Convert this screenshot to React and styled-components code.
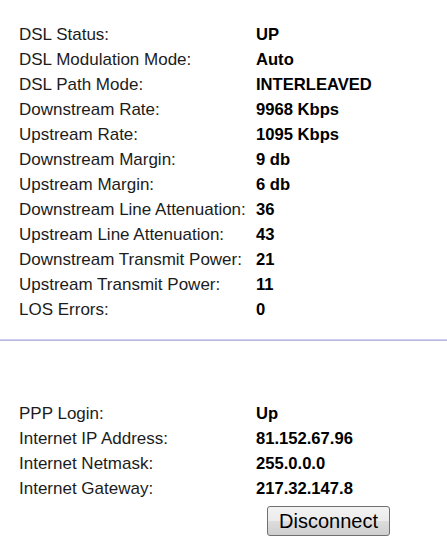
import styled, { createGlobalStyle } from "styled-components";

const GlobalStyle = createGlobalStyle`
  html, body {
    margin: 0;
    padding: 0;
    background: #ffffff;
  }
  body {
    font-family: "Liberation Sans", Arial, sans-serif;
  }
`;

const Page = styled.div`
  width: 447px;
  height: 556px;
  display: flex;
  flex-direction: column;
  overflow: hidden;
`;

const Section = styled.section`
  display: grid;
  grid-template-columns: 237px 1fr;
  grid-auto-rows: 25px;
  padding: ${({ $top }) => $top}px 0 0 19px;
`;

const Label = styled.div`
  font-size: 17px;
  line-height: 25px;
  color: #1c1c1c;
  white-space: nowrap;
`;

const Value = styled.div`
  font-size: 16.6px;
  line-height: 25px;
  font-weight: bold;
  color: #000;
  white-space: nowrap;
`;

const Divider = styled.hr`
  margin: 17px 0 0;
  height: 0;
  border: none;
  border-top: 1px solid #cfcfee;
  border-bottom: 1px solid #b7b7df;
`;

const ButtonRow = styled.div`
  padding: 5px 0 0 267px;
`;

const Button = styled.button`
  width: 123px;
  height: 30px;
  padding: 0;
  border: 1px solid #707070;
  border-radius: 3px;
  background: linear-gradient(#f3f3f3 0%, #ebebeb 50%, #dddddd 51%, #cfcfcf 100%);
  font-family: "Liberation Sans", Arial, sans-serif;
  font-size: 20px;
  color: #000;
  line-height: 28px;
`;

const dsl = [
  ["DSL Status:", "UP"],
  ["DSL Modulation Mode:", "Auto"],
  ["DSL Path Mode:", "INTERLEAVED"],
  ["Downstream Rate:", "9968 Kbps"],
  ["Upstream Rate:", "1095 Kbps"],
  ["Downstream Margin:", "9 db"],
  ["Upstream Margin:", "6 db"],
  ["Downstream Line Attenuation:", "36"],
  ["Upstream Line Attenuation:", "43"],
  ["Downstream Transmit Power:", "21"],
  ["Upstream Transmit Power:", "11"],
  ["LOS Errors:", "0"],
];

const ppp = [
  ["PPP Login:", "Up"],
  ["Internet IP Address:", "81.152.67.96"],
  ["Internet Netmask:", "255.0.0.0"],
  ["Internet Gateway:", "217.32.147.8"],
];

const Rows = ({ items }) =>
  items.map(([label, value]) => [
    <Label key={label + "-l"}>{label}</Label>,
    <Value key={label + "-v"}>{value}</Value>,
  ]);

export default function App() {
  return (
    <Page>
      <GlobalStyle />
      <Section $top={22}>
        <Rows items={dsl} />
      </Section>
      <Divider />
      <Section $top={60}>
        <Rows items={ppp} />
      </Section>
      <ButtonRow>
        <Button type="button">Disconnect</Button>
      </ButtonRow>
    </Page>
  );
}
